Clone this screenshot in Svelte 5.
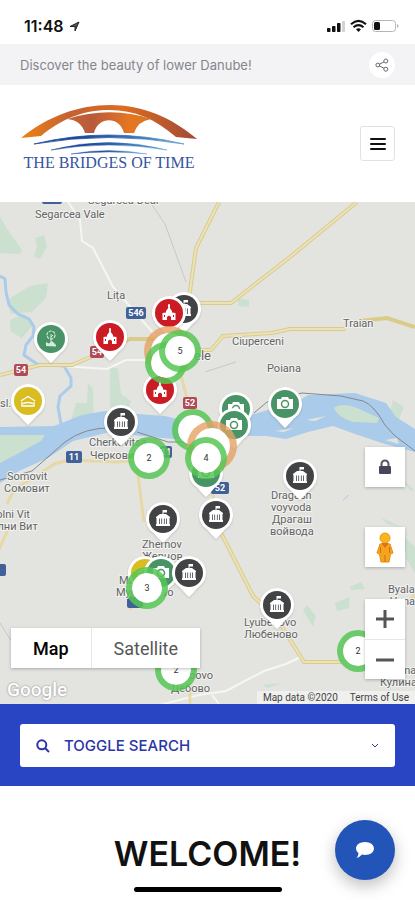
<script lang="ts">
	type Pin = { x: number; y: number; kind: string; name: string };
	type Cluster = { x: number; y: number; count: string; size: string };

	let mapType = 'map';
	let searchOpen = false;
	let locked = true;

	// x / y are the centre of the marker on the map canvas
	const pins: Pin[] = [
		{ x: 184, y: 107, kind: 'museum', name: 'Museum' },
		{ x: 169, y: 111, kind: 'church', name: 'Church' },
		{ x: 110, y: 135, kind: 'church', name: 'Church' },
		{ x: 51, y: 137, kind: 'nature', name: 'Nature' },
		{ x: 160, y: 188, kind: 'church', name: 'Church' },
		{ x: 28, y: 199, kind: 'lodging', name: 'Lodging' },
		{ x: 285, y: 202, kind: 'photo', name: 'Viewpoint' },
		{ x: 236, y: 207, kind: 'photo', name: 'Viewpoint' },
		{ x: 234, y: 223, kind: 'photo', name: 'Viewpoint' },
		{ x: 121, y: 220, kind: 'museum', name: 'Museum' },
		{ x: 206, y: 271, kind: 'photo', name: 'Viewpoint' },
		{ x: 300, y: 274, kind: 'museum', name: 'Museum' },
		{ x: 216, y: 313, kind: 'museum', name: 'Museum' },
		{ x: 163, y: 317, kind: 'museum', name: 'Museum' },
		{ x: 145, y: 371, kind: 'lodging', name: 'Lodging' },
		{ x: 161, y: 371, kind: 'photo', name: 'Viewpoint' },
		{ x: 189, y: 371, kind: 'museum', name: 'Museum' },
		{ x: 277, y: 403, kind: 'museum', name: 'Museum' }
	];

	const clusters: Cluster[] = [
		{ x: 169, y: 149, count: '', size: 'large' },
		{ x: 166, y: 161, count: '', size: 'small' },
		{ x: 180, y: 149, count: '5', size: 'small' },
		{ x: 193, y: 228, count: '', size: 'small' },
		{ x: 212, y: 244, count: '', size: 'large' },
		{ x: 206, y: 256, count: '4', size: 'small' },
		{ x: 149, y: 256, count: '2', size: 'small' },
		{ x: 147, y: 386, count: '3', size: 'small' },
		{ x: 176, y: 468, count: '2', size: 'small' },
		{ x: 358, y: 449, count: '2', size: 'small' }
	];

	const places = [
		{ x: 88, y: 2, text: 'Segarcea-Deal' },
		{ x: 35, y: 16, text: 'Segarcea Vale' },
		{ x: 107, y: 97, text: 'Lița' },
		{ x: 343, y: 125, text: 'Traian' },
		{ x: 232, y: 143, text: 'Ciuperceni' },
		{ x: 267, y: 170, text: 'Poiana' },
		{ x: 0, y: 205, text: 'sl.' },
		{ x: 89, y: 244, text: 'Cherkovitsa' },
		{ x: 90, y: 257, text: 'Черковица' },
		{ x: 7, y: 278, text: 'Somovit' },
		{ x: 4, y: 290, text: 'Сомовит' },
		{ x: -11, y: 316, text: 'Dolni Vit' },
		{ x: -17, y: 328, text: 'Долни Вит' },
		{ x: 271, y: 297, text: 'Dragash' },
		{ x: 271, y: 309, text: 'voyvoda' },
		{ x: 272, y: 321, text: 'Драгаш' },
		{ x: 270, y: 333, text: 'войвода' },
		{ x: 142, y: 346, text: 'Zhernov' },
		{ x: 142, y: 358, text: 'Жернов' },
		{ x: 119, y: 382, text: 'Muselievo' },
		{ x: 116, y: 394, text: 'Муселиево' },
		{ x: 244, y: 424, text: 'Lyubenovo' },
		{ x: 244, y: 436, text: 'Любеново' },
		{ x: 388, y: 391, text: 'Byala' },
		{ x: 390, y: 403, text: 'Vona' },
		{ x: 386, y: 472, text: 'Kulina' },
		{ x: 380, y: 484, text: 'Кулина' },
		{ x: 176, y: 477, text: 'Debovo' },
		{ x: 171, y: 490, text: 'Дебово' }
	];

	const shields = [
		{ x: 126, y: 105, w: 20, text: '546', color: '#3f6198' },
		{ x: 42, y: -10, w: 20, text: '', color: '#3f6198' },
		{ x: 66, y: 249, w: 16, text: '11', color: '#3f6198' },
		{ x: 160, y: 244, w: 12, text: '11', color: '#3f6198' },
		{ x: 211, y: 280, w: 18, text: '52', color: '#3f6198' },
		{ x: -9, y: 362, w: 15, text: '', color: '#3f6198' },
		{ x: 127, y: 394, w: 16, text: '', color: '#3f6198' },
		{ x: 14, y: 162, w: 14, text: '54', color: '#b04a55' },
		{ x: 90, y: 144, w: 14, text: '54', color: '#b04a55' },
		{ x: 183, y: 195, w: 14, text: '52', color: '#b04a55' }
	];
</script>

<div class="page">
	<!-- Status bar -->
	<div class="status-bar">
		<div class="clock">
			<span>11:48</span>
			<svg width="11" height="11" viewBox="0 0 11 11">
				<path d="M10 1L6 10V5.5H1Z" fill="#555" stroke="#222" stroke-width="1" stroke-linejoin="round" />
			</svg>
		</div>
		<svg width="72" height="14" viewBox="0 0 72 14">
			<rect x="0" y="9" width="3.5" height="4" rx="0.8" fill="#111" />
			<rect x="5" y="7" width="3.5" height="6" rx="0.8" fill="#111" />
			<rect x="10" y="4" width="3.5" height="9" rx="0.8" fill="#111" />
			<rect x="15" y="2" width="3" height="11" rx="0.8" fill="#d4d4d4" />
			<path d="M24 5.2Q31.5 -1.5 39 5.2" fill="none" stroke="#111" stroke-width="2.2" />
			<path d="M26.5 8.2Q31.5 4 36.5 8.2" fill="none" stroke="#111" stroke-width="2" />
			<path d="M29 10.2Q31.5 8.2 34 10.2L31.5 13Z" fill="#111" />
			<rect x="45.5" y="1.5" width="23" height="11" rx="3" fill="#fff" stroke="#b5b5b5" />
			<rect x="47" y="3" width="6" height="8" rx="1.5" fill="#111" />
			<path d="M70 5V9Q71.5 8.5 71.5 7T70 5Z" fill="#b5b5b5" />
		</svg>
	</div>

	<!-- Tagline -->
	<div class="tagline">
		<span>Discover the beauty of lower Danube!</span>
		<button class="share" aria-label="Share">
			<svg width="14" height="14" viewBox="0 0 14 14" fill="none" stroke="#66666c">
				<circle cx="2.8" cy="7" r="1.9" />
				<circle cx="10.8" cy="3" r="2" />
				<circle cx="10.8" cy="11.2" r="2" />
				<path d="M4.5 6.2L9 3.9M4.5 7.9L9 10.3" />
			</svg>
		</button>
	</div>

	<!-- Header -->
	<header class="header">
		<a class="logo" href="/">
			<svg width="176" height="50" viewBox="0 0 176 50">
				<defs>
					<linearGradient id="arch">
						<stop offset="0" stop-color="#ef8215" />
						<stop offset="0.28" stop-color="#c46134" />
						<stop offset="0.58" stop-color="#dc6d20" />
						<stop offset="1" stop-color="#a04a37" />
					</linearGradient>
					<linearGradient id="deck">
						<stop offset="0" stop-color="#c96632" />
						<stop offset="0.3" stop-color="#b85a3c" />
						<stop offset="0.75" stop-color="#e67621" />
						<stop offset="1" stop-color="#d87526" />
					</linearGradient>
					<linearGradient id="wave">
						<stop offset="0" stop-color="#204da5" />
						<stop offset="0.3" stop-color="#1b4799" />
						<stop offset="1" stop-color="#5ba1d6" />
					</linearGradient>
				</defs>
				<path d="M0 33C27 11 58 0 89 0C121 0 150 12 176 34L155 32C134 14 114 5 88 5C61 5 39 15 20 31Z" fill="url(#arch)" />
				<path d="M46 14C74 5 104 5 130 14Q117 16 113 28H103C99 11 77 11 73 28H64Q60 15 46 14Z" fill="url(#deck)" />
				<path d="M13 39Q87 21 163 39Q88 26 13 39Z" fill="url(#wave)" stroke="url(#wave)" stroke-width="0.8" />
				<path d="M30 45Q88 30 146 45Q88 35 30 45Z" fill="url(#wave)" stroke="url(#wave)" stroke-width="0.5" />
				<path d="M50 49Q88 42 126 49Q88 45 50 49Z" fill="url(#wave)" stroke="url(#wave)" stroke-width="0.4" />
			</svg>
			<span>THE BRIDGES OF TIME</span>
		</a>
		<button class="menu" aria-label="Menu">
			<svg width="16" height="14" viewBox="0 0 16 14" stroke="#111" stroke-width="2" stroke-linecap="round">
				<path d="M1 2H15M1 7H15M1 12H15" />
			</svg>
		</button>
	</header>

	<!-- Map -->
	<section class="map" aria-label="Map of places">
		<svg class="terrain" width="100%" height="100%">
			<!-- Woodland -->
			<g fill="#cbe0cf">
				<path d="M0 15L8 28L22 48L20 52L0 51Z" />
				<path d="M35 36L44 33L47 45L40 57L34 54L37 44Z" />
				<path d="M7 98L30 84L48 81L46 96L32 110L11 112Z" />
				<path d="M10 118L24 112L34 122L22 136L11 130Z" />
				<path d="M88 181L93 187L94 221L69 225L76 201H87Z" />
				<path d="M110 164L118 167L121 192L131 199L125 216L110 211Z" />
				<path d="M238 96L249 98V105L238 104Z" />
				<path d="M393 198L404 205L398 220L415 232V242L397 230L388 218Z" />
				<path d="M404 335L415 345V371L406 357Z" />
				<path d="M335 401L350 395L349 406L337 409ZM349 385L361 380L365 387L352 388Z" />
				<path d="M307 403L316 414L313 425L303 408ZM262 483L282 481L268 486Z" />
				<path d="M380 315L401 325L388 322ZM400 275L415 289L410 288Z" />
			</g>
			<!-- River -->
			<path
				d="M0 225L54 224L82 213L105 209L137 212L165 214L200 223L222 223L251 213L268 208L292 203L308 193L355 191L386 201L396 215L415 227V250L385 242L355 232L333 224L308 230L286 237L266 234L237 234L200 239L150 235L110 230L73 239L48 256L19 269L0 281Z"
				fill="#aacbe9"
			/>
			<path d="M0 233L45 233L41 239L19 251L0 261Z" fill="#cbe0cf" />
			<path d="M334 206Q342 200 357 206L379 216L377 221L353 220Q337 215 334 206Z" fill="#cbe0cf" />
			<path d="M385 238L397 236L399 242ZM306 218L326 214L315 219ZM275 229L294 226L284 230Z" fill="#e1e5dd" />
			<path
				d="M0 74L5 77L6 90L9 103L18 112L29 117L34 125L33 134L26 143L24 153L37 162L64 164L71 176L71 184L60 194L58 205L61 222"
				fill="none"
				stroke="#aacbe9"
				stroke-width="3"
			/>
			<path d="M343 298L349 293" stroke="#aacbe9" />
			<!-- Minor roads -->
			<g fill="none" stroke="#f6f6f3" stroke-width="2">
				<path d="M68 0L80 18L82 39L93 46L113 85L155 133M63 164L107 167L126 158L160 158" />
				<path d="M152 505L199 493L226 489L264 469L286 462L301 455M212 493L219 502" />
			</g>
			<path d="M150 0L165 22L186 80M205 170L236 160M0 421L10 437L26 445" fill="none" stroke="#c8c8c4" />
			<!-- Main roads -->
			<g fill="none" stroke="#dbcb8b" stroke-width="4">
				<path d="M219 0L196 46L189 96L184 115M357 0L290 55L231 101H195" />
				<path d="M0 173L40 163L72 163L100 151L130 137H158M188 148H211L223 134L272 131L290 127H346M360 119L387 116L415 125" />
				<path d="M217 323L253 394L277 417L304 460H341" />
			</g>
			<g fill="none" stroke="#e6d9a6" stroke-width="3">
				<path d="M180 170L187 196M7 302L15 286L34 276L54 262L69 258L117 260L140 258M9 325L-2 350" />
				<path d="M137 265L144 320M211 277L217 326M131 380V408M190 478V502M407 402L415 392" />
			</g>
			<g fill="none" stroke="#ece2ba" stroke-width="2">
				<path d="M219 0L196 46L189 96L184 115M357 0L290 55L231 101H195" />
				<path d="M217 323L253 394L277 417L304 460H341M188 148H211L223 134L272 131L290 127H346M0 173L40 163L72 163L100 151" />
			</g>
			<!-- Border -->
			<path
				d="M0 278L32 269L65 240Q85 225 112 226M137 230L168 240H190M254 211L267 200L302 191L341 194L363 199Q374 203 385 223L394 233L415 249"
				fill="none"
				stroke="#85888b"
			/>
			{#each shields as shield}
				<rect x={shield.x} y={shield.y} width={shield.w} height="12" rx="2" fill={shield.color} />
				<text class="shield-text" x={shield.x + shield.w / 2} y={shield.y + 9} text-anchor="middle">{shield.text}</text>
			{/each}
			{#each places as place}
				<text class="place" x={place.x} y={place.y}>{place.text}</text>
			{/each}
			<text class="place town" x="211" y="158" text-anchor="end">Măgurele</text>
		</svg>

		{#each pins as pin}
			<button class="pin {pin.kind}" style="left: {pin.x}px; top: {pin.y}px" aria-label={pin.name}>
				<svg width="36" height="44" viewBox="0 0 36 44">
					<path class="drop" d="M18 1A17 17 0 0 1 31 29Q27 32 23 37L18 42L13 37Q9 32 5 29A17 17 0 0 1 18 1Z" />
					<circle class="disc" cx="18" cy="18" r="14" />
					{#if pin.kind === 'museum'}
						<path
							d="M11 16L15 13H17.5V9H22V11.5H18.5V13H21L25 16V17H24.5V23H25V25H11V23H11.500V17H11ZM14 17.5V23H14.8V17.5ZM16.3 17.5V23H17.1V17.5ZM18.900 17.5V23H19.700V17.5ZM21.200 17.5V23H22V17.5Z"
							fill="#fff"
							fill-rule="evenodd"
						/>
					{:else if pin.kind === 'church'}
						<path d="M18 9V14M17 11H19" stroke="#fff" stroke-width="1.5" />
						<path d="M15 16L18 12L21 16V17.5L24.5 18V25H20V22Q18 19.5 16 22V25H11.5V18L15 17.5Z" fill="#fff" />
						<path d="M13.5 20V22M22.5 20V22" stroke="#cb1c26" />
					{:else if pin.kind === 'photo'}
						<path d="M10 13H14L15 11H21L22 13H26V23H10Z" fill="#fff" />
						<circle cx="18" cy="18" r="3.5" fill="#fff" stroke="#489466" stroke-width="1.5" />
					{:else if pin.kind === 'lodging'}
						<path d="M11 18L18 13.5L25 18M12 19V23H24V19M13 20.500Q18 18.500 23 20.500" fill="none" stroke="#fff" stroke-width="1.3" />
					{:else}
						<circle cx="18" cy="14" r="4" fill="none" stroke="#d4eadb" stroke-width="1.2" stroke-dasharray="3 1" />
						<path d="M18 13V21M18 16L20 14" stroke="#d4eadb" />
						<path d="M13 25V21L16 22.500L19 20L23 24V25.500Z" fill="#d4eadb" />
					{/if}
				</svg>
			</button>
		{/each}

		{#each clusters as cluster}
			<button
				class="cluster {cluster.size}"
				style="left: {cluster.x}px; top: {cluster.y}px"
				aria-label="Cluster {cluster.count}">{cluster.count}</button
			>
		{/each}

		<div class="map-type">
			<button class:active={mapType === 'map'} on:click={() => (mapType = 'map')}>Map</button>
			<button class:active={mapType === 'satellite'} on:click={() => (mapType = 'satellite')}>Satellite</button>
		</div>

		<div class="map-controls">
			<button class="control" aria-label="Lock map" aria-pressed={locked} on:click={() => (locked = !locked)}>
				<svg width="14" height="16" viewBox="0 0 14 16">
					<path d="M3.5 8V5A3.5 3.5 0 0 1 10.5 5V8" fill="none" stroke="#555568" stroke-width="2" />
					<rect x="1" y="7" width="12" height="8" rx="1" fill="#47475c" />
				</svg>
			</button>
			<button class="control" aria-label="Street View">
				<svg width="18" height="31" viewBox="0 0 18 31">
					<path d="M4 12H14L17 21L14.500 22L13 30H5L3.500 22L1 21Z" fill="#f4a51c" stroke="#e48d16" />
					<circle cx="9" cy="6" r="5" fill="#fbb51d" stroke="#e99717" />
					<path d="M5 11L9 16L13 11Z" fill="#e66d22" />
					<path d="M9 23V30M4.500 15V21M13.500 15V21" stroke="#cb7012" />
				</svg>
			</button>
			<div class="zoom">
				<button aria-label="Zoom in">
					<svg width="18" height="18" viewBox="0 0 18 18" stroke="#555" stroke-width="3"><path d="M0 9H18M9 0V18" /></svg>
				</button>
				<button aria-label="Zoom out">
					<svg width="18" height="18" viewBox="0 0 18 18" stroke="#555" stroke-width="3"><path d="M0 9H18" /></svg>
				</button>
			</div>
		</div>

		<div class="attribution">
			<span class="google">Google</span>
			<div class="terms">
				<span>Map data ©2020</span>
				<a href="#terms">Terms of Use</a>
			</div>
		</div>
	</section>

	<!-- Search -->
	<div class="search">
		<button class="toggle" aria-expanded={searchOpen} on:click={() => (searchOpen = !searchOpen)}>
			<svg width="14" height="14" viewBox="0 0 14 14" fill="none" stroke="currentColor" stroke-width="2">
				<circle cx="5.8" cy="5.8" r="4.5" />
				<path d="M9 9L13 13" />
			</svg>
			<span>TOGGLE SEARCH</span>
			<svg width="8" height="6" viewBox="0 0 8 6" fill="none" stroke="currentColor"><path d="M1 1L4 4L7 1" /></svg>
		</button>
	</div>

	<main class="welcome">
		<h1>WELCOME!</h1>
		<div class="home-bar"></div>
	</main>

	<button class="chat" aria-label="Open chat">
		<svg width="20" height="18" viewBox="0 0 20 18">
			<path d="M10 1C15 1 19 3.8 19 7.5S15 14 10 14Q8.5 14 7 13.6Q5 16 1.5 17Q3.5 14.5 3.5 12.3Q1 10.5 1 7.5C1 3.8 5 1 10 1Z" fill="#fff" />
		</svg>
	</button>
</div>

<style>
	:global(body) {
		background: #fff;
	}

	.page {
		font-family: Inter, 'Liberation Sans', sans-serif;
		color: #111;
	}

	button {
		display: flex;
		align-items: center;
		justify-content: center;
		padding: 0;
		border: 0;
		font-family: inherit;
		color: inherit;
		cursor: pointer;
	}

	.status-bar {
		display: flex;
		align-items: center;
		justify-content: space-between;
		box-sizing: border-box;
		height: 44px;
		padding: 8px 16px 0 24px;
	}

	.clock {
		display: flex;
		align-items: center;
		gap: 5px;
		font-size: 16px;
		font-weight: 600;
	}

	.tagline {
		display: flex;
		align-items: center;
		justify-content: space-between;
		height: 41px;
		padding: 0 20px;
		background: #f3f3f6;
		color: #85858b;
		font-size: 13px;
	}

	.share {
		width: 26px;
		height: 26px;
		border-radius: 50%;
		background: #fff;
	}

	.header {
		display: flex;
		align-items: center;
		justify-content: space-between;
		height: 117px;
		padding: 0 20px;
	}

	.logo {
		display: flex;
		flex-direction: column;
		align-items: center;
		padding: 0 0 12px 1px;
		color: #3454a0;
		font-family: 'Liberation Serif', serif;
		font-size: 16px;
		line-height: 16px;
		text-decoration: none;
	}

	.menu {
		width: 35px;
		height: 35px;
		border: 1px solid #e2e2e4;
		border-radius: 3px;
		background: #fff;
	}

	.map {
		position: relative;
		height: 502px;
		overflow: hidden;
		background: #e3e4e0;
		font-family: Roboto, 'Liberation Sans', sans-serif;
	}

	.terrain {
		display: block;
	}

	.place {
		font-size: 11px;
		fill: #626466;
		stroke: #f2f2ef;
		stroke-width: 2px;
		paint-order: stroke;
	}

	.town {
		font-size: 13px;
	}

	.shield-text {
		font-size: 9px;
		font-weight: 700;
		fill: #fff;
	}

	.pin {
		position: absolute;
		margin: -18px 0 0 -18px;
		background: none;
	}

	.drop {
		fill: #fff;
		filter: drop-shadow(0 1px 1px rgba(0, 0, 0, 0.15));
	}

	.museum .disc {
		fill: #424345;
	}

	.church .disc {
		fill: #cb1c26;
	}

	.photo .disc,
	.nature .disc {
		fill: #489466;
	}

	.lodging .disc {
		fill: #d9bd20;
	}

	.cluster {
		position: absolute;
		box-sizing: border-box;
		width: 42px;
		height: 42px;
		margin: -21px 0 0 -21px;
		border: 6px solid rgba(86, 199, 85, 0.85);
		border-radius: 50%;
		background: #fff;
		background-clip: padding-box;
		color: #333;
		font-size: 9px;
	}

	.cluster.large {
		width: 50px;
		height: 50px;
		margin: -25px 0 0 -25px;
		border: 7px solid rgba(229, 161, 100, 0.8);
	}

	.map-type {
		position: absolute;
		left: 11px;
		bottom: 36px;
		display: flex;
		height: 40px;
		background: #fff;
		box-shadow: 0 1px 3px rgba(0, 0, 0, 0.25);
	}

	.map-type button {
		padding: 0 22px;
		background: none;
		color: #565656;
		font-size: 18px;
	}

	.map-type button + button {
		border-left: 1px solid #e6e6e6;
	}

	.map-type .active {
		color: #000;
		font-weight: 500;
	}

	.map-controls {
		position: absolute;
		right: 10px;
		bottom: 25px;
		display: flex;
		flex-direction: column;
	}

	.control,
	.zoom {
		width: 40px;
		background: #fff;
		box-shadow: 0 1px 3px rgba(0, 0, 0, 0.25);
	}

	.control {
		height: 40px;
		margin-bottom: 40px;
	}

	.control + .control {
		margin-bottom: 32px;
	}

	.zoom button {
		width: 100%;
		height: 40px;
		background: none;
	}

	.zoom button + button {
		border-top: 1px solid #e6e6e6;
	}

	.attribution {
		position: absolute;
		left: 0;
		right: 0;
		bottom: 0;
		display: flex;
		align-items: flex-end;
		justify-content: space-between;
		padding-left: 7px;
		pointer-events: none;
	}

	.google {
		color: #fff;
		font-size: 19px;
		font-weight: 500;
		line-height: 28px;
		text-shadow: 0 0 2px #777;
	}

	.terms {
		display: flex;
		gap: 12px;
		padding: 0 6px;
		background: rgba(245, 245, 245, 0.7);
		color: #444;
		font-size: 10px;
		line-height: 13px;
	}

	.terms a {
		color: inherit;
		text-decoration: none;
		pointer-events: auto;
	}

	.search {
		padding: 20px 20px 19px;
		background: #2945c4;
	}

	.toggle {
		gap: 14px;
		width: 100%;
		height: 43px;
		padding: 0 16px;
		border-radius: 3px;
		background: #fff;
		color: #2a35a6;
		font-size: 15px;
		font-weight: 500;
	}

	.toggle span {
		flex: 1;
		text-align: left;
	}

	.welcome {
		display: flex;
		flex-direction: column;
		align-items: center;
		padding: 48px 20px 8px;
	}

	h1 {
		margin: 0;
		font-size: 34px;
		font-weight: 600;
		line-height: 40px;
	}

	.home-bar {
		width: 148px;
		height: 5px;
		margin-top: 13px;
		border-radius: 3px;
		background: #000;
	}

	.chat {
		position: fixed;
		right: 20px;
		bottom: 20px;
		width: 60px;
		height: 60px;
		border-radius: 50%;
		background: #2354b8;
		box-shadow: 0 6px 16px rgba(0, 0, 0, 0.25);
	}
</style>
